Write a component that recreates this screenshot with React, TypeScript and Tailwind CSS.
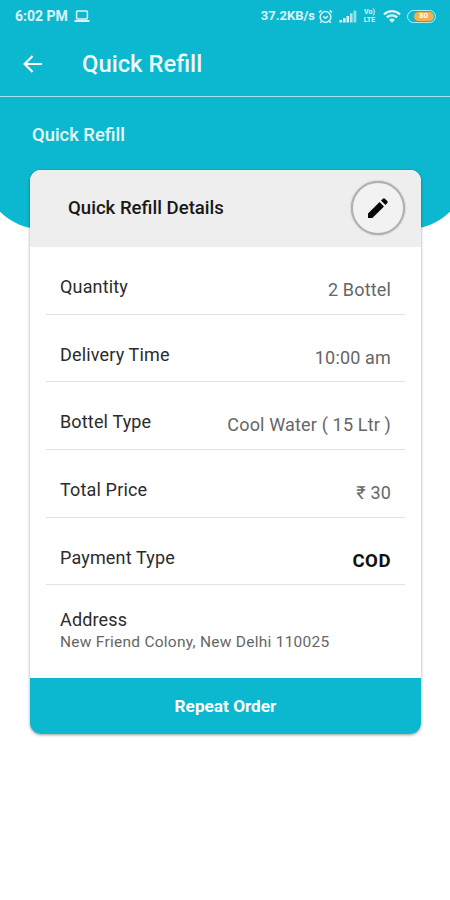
import clsx from "clsx";

const details = [
    { label: "Quantity", value: "2 Bottel" },
    { label: "Delivery Time", value: "10:00 am" },
    { label: "Bottel Type", value: "Cool Water ( 15 Ltr )" },
    { label: "Total Price", value: "₹ 30" },
    { label: "Payment Type", value: "COD", strong: true },
];

function LaptopIcon() {
    return (
        <svg className="ml-[6px] h-[14px] w-[16px]" viewBox="0 0 16 14" fill="none" stroke="currentColor">
            <rect x="2.6" y="1.9" width="10.8" height="8" rx="1" strokeWidth="1.5" />
            <path d="M0.5 12h15" strokeWidth="2" />
        </svg>
    );
}

function AlarmIcon() {
    return (
        <svg className="h-[15px] w-[15px]" viewBox="0 0 15 15" fill="none" stroke="currentColor" strokeWidth="1.5">
            <circle cx="7.5" cy="8" r="5.4" />
            <path d="M5.2 7.4l2.3 1.8 2.5-2M1 3.4l2.4-2M14 3.4l-2.4-2M3.4 12.4l-1.2 1.4M11.6 12.4l1.2 1.4" />
        </svg>
    );
}

function SignalIcon() {
    return (
        <svg className="h-[13px] w-[18px]" viewBox="0 0 18 13" fill="currentColor">
            <rect x="0.5" y="10" width="2.6" height="2.5" />
            <rect x="4" y="8.2" width="2.6" height="4.3" />
            <rect x="7.5" y="6" width="2.6" height="6.5" />
            <rect x="11" y="3.4" width="2.6" height="9.1" opacity="0.8" />
            <rect x="14.5" y="0.6" width="2.8" height="11.9" opacity="0.65" />
        </svg>
    );
}

function WifiIcon() {
    return (
        <svg className="h-[13px] w-[18px]" viewBox="0 0 18 13" fill="none" stroke="currentColor" strokeWidth="2.3">
            <path d="M1 4.4a11.6 11.6 0 0 1 16 0" />
            <path d="M3.8 7.4a7.6 7.6 0 0 1 10.4 0" />
            <path d="M6.1 9.8a4.2 4.2 0 0 1 5.8 0L9 12.8z" fill="currentColor" stroke="none" />
        </svg>
    );
}

function StatusBar() {
    return (
        <div className="flex h-8 items-center pl-[15px] pr-[14px] text-white/85">
            <span className="text-[14px] font-bold leading-4">6:02 PM</span>
            <LaptopIcon />
            <span className="ml-auto mr-[3px] text-[13px] font-bold leading-4">37.2KB/s</span>
            <AlarmIcon />
            <span className="ml-[6px]"><SignalIcon /></span>
            <span className="ml-[5px] flex w-[15px] flex-col items-center text-[7px] font-bold leading-[8px]">
                <span>Vo)</span>
                <span>LTE</span>
            </span>
            <span className="ml-[6px]"><WifiIcon /></span>
            <span className="ml-[6px] flex h-[13px] w-[29px] items-center justify-end rounded-full border-[1.5px] border-white/70 pr-[1.5px]">
                <span className="flex h-[9px] w-[20px] items-center justify-center rounded-full bg-[#f3b04c] text-[8px] font-bold leading-none text-white">80</span>
            </span>
        </div>
    );
}

function DetailRow({ label, value, strong }: { label: string; value: string; strong?: boolean }) {
    return (
        <div className="flex h-[67.7px] justify-between border-b border-[#e2e2e2] px-[14px] text-[18px] leading-6 tracking-[0.16px]">
            <span className="pt-7 text-[#2b2b2b]">{label}</span>
            <span className={clsx("pt-[31px]", strong ? "text-[18.6px] font-bold tracking-[0.5px] text-[#111]" : "text-[#666]")}>{value}</span>
        </div>
    );
}

function App() {
    return (
        <div className="h-[900px] w-[450px] overflow-hidden bg-white font-[Roboto,sans-serif]">
            <div className="bg-[#0cb8cf] text-white">
                <StatusBar />
                <div className="flex h-[65px] items-center border-b border-white/65 pl-[23px]">
                    <svg className="h-[18px] w-[20px]" viewBox="0 0 20 18" fill="none" stroke="currentColor" strokeWidth="2.2">
                        <path d="M19 9H2M9.6 1L1.6 9l8 8" />
                    </svg>
                    <h1 className="ml-[39px] pb-px text-[23.8px] font-medium leading-7 text-white/95">Quick Refill</h1>
                </div>
            </div>
            <div className="-mx-[18px] h-[131.5px] rounded-b-[60px] bg-[#0cb8cf] pl-[50px] pt-[26px]">
                <h2 className="text-[18.4px] font-medium leading-6 text-white/90">Quick Refill</h2>
            </div>
            <div className="relative -mt-[59px] ml-[30px] w-[391px] overflow-hidden rounded-[11px] bg-white shadow-[0_1px_3px_rgba(0,0,0,0.4)]">
                <div className="flex h-[77.5px] items-center justify-between bg-[#eee] pl-[38px] pr-4">
                    <h3 className="text-[18.6px] font-medium leading-6 text-[#181818]">Quick Refill Details</h3>
                    <button className="flex h-[54px] w-[54px] items-center justify-center rounded-full border-2 border-[#b0b0b0] bg-[#f2f2f2] shadow-[0_0_2px_rgba(0,0,0,0.3)]">
                        <svg className="h-[22px] w-[22px]" viewBox="0 0 22 22" fill="#080808">
                            <path d="M1 16.6L12.6 5l4.4 4.4L5.4 21H1z" />
                            <path d="M14 3.6l1.9-1.9a1.4 1.4 0 0 1 2 0l2.4 2.4a1.4 1.4 0 0 1 0 2L18.4 8z" />
                        </svg>
                    </button>
                </div>
                <div className="px-4">
                    {details.map((item) => (
                        <DetailRow key={item.label} {...item} />
                    ))}
                    <div className="h-[92.5px] px-[14px] pt-[23px]">
                        <p className="text-[18px] leading-6 tracking-[0.16px] text-[#2b2b2b]">Address</p>
                        <p className="text-[15.5px] leading-5 tracking-[0.26px] text-[#666]">New Friend Colony, New Delhi 110025</p>
                    </div>
                </div>
                <button className="h-14 w-full bg-[#0cb8cf] pt-px text-[17.2px] font-bold text-white">Repeat Order</button>
            </div>
        </div>
    );
}

export default App;
